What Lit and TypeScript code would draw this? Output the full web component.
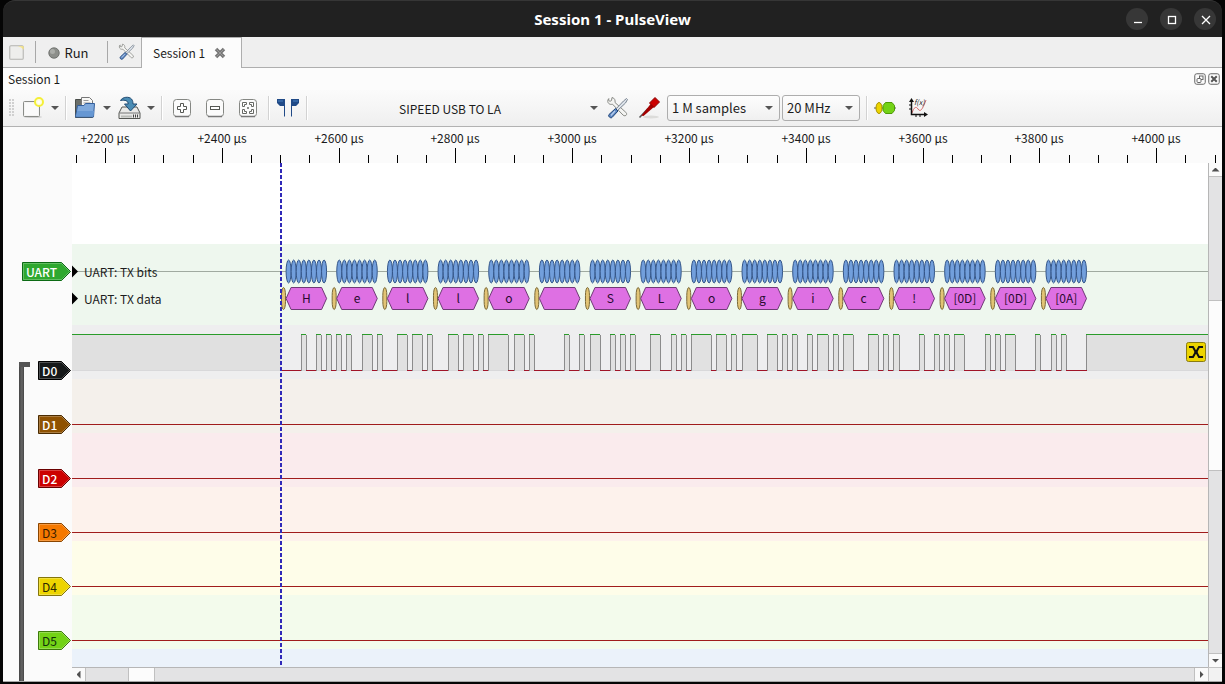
import { LitElement, html, svg, css } from "lit";
import { customElement, property, state } from "lit/decorators.js";

const CURSOR_X = 209;
const BIT = 5.066;
const FRAME = BIT * 10;
const MESSAGE = [
  ["H", 0x48], ["e", 0x65], ["l", 0x6c], ["l", 0x6c], ["o", 0x6f], ["", 0x20],
  ["S", 0x53], ["L", 0x4c], ["o", 0x6f], ["g", 0x67], ["i", 0x69], ["c", 0x63],
  ["!", 0x21], ["[0D]", 0x0d], ["[0D]", 0x0d], ["[0A]", 0x0a],
] as [string, number][];

const CHANNELS = [
  { name: "D0", fill: "#16191a", edge: "#000000", ink: "#ffffff", row: "#eeeeef" },
  { name: "D1", fill: "#8f5202", edge: "#4a2b01", ink: "#ffffff", row: "#f4f0eb" },
  { name: "D2", fill: "#cc0000", edge: "#6a0000", ink: "#ffffff", row: "#faebed" },
  { name: "D3", fill: "#f57900", edge: "#8a4500", ink: "#3a1c00", row: "#fdf2ec" },
  { name: "D4", fill: "#edd400", edge: "#84760a", ink: "#2c2800", row: "#fefde9" },
  { name: "D5", fill: "#73d216", edge: "#3c7a0a", ink: "#10300a", row: "#f3fbec" },
];

/** Level of the serial line for every bit slot, start and stop bits included. */
const LEVELS = MESSAGE.flatMap(([, byte]) => [
  0,
  ...Array.from({ length: 8 }, (_, i) => (byte >> i) & 1),
  1,
]);

const tools = svg`
  <path d="M3 2.500C1 4 1.500 7 3.500 8c1 .6 2.200.4 3 .2L17 19c1 1.200 3 1 3.500-.3.4-1-.1-1.800-.7-2.400L9 6.500c.5-2-.3-4.500-3-5l-.5 3-1.500.8-1.500-1z" fill="#f4f4f2" stroke="#888a85"/>
  <path d="M20.500 2.500l1 1-2 3.500L10 16l-1.500-1.500 9-9.500z" fill="#dde3ea" stroke="#7a8490"/>
  <path d="M9.500 12.500l2.500 2.500-6 6.500c-1.500 1.300-4.500-1.500-3-3z" fill="#5d86c0" stroke="#1f4478"/>
  <path d="M9 15l-4 4.500" stroke="#b9cfee" stroke-width="1.200"/>`;

@customElement("tool-icon")
class ToolIcon extends LitElement {
  @property() name = "";
  @property({ type: Number }) size = 24;
  static styles = css`
    :host { display: block; line-height: 0; }
    svg { display: block; fill: none; }
  `;
  private art() {
    switch (this.name) {
      case "new":
        return svg`<ellipse cx="12" cy="21" rx="9" ry="1" fill="#d0d0d0"/>
          <rect x="2.500" y="5.500" width="16" height="15" rx="1" fill="#f4f4f3" stroke="#8a8c88"/>
          <rect x="4" y="7" width="13" height="12" fill="#fafafa"/>
          <circle cx="18" cy="6" r="4" fill="#fffde0" stroke="#f4ef38" stroke-width="2"/>
          <circle cx="18" cy="6" r="1.500" fill="#fff"/>`;
      case "new-flat":
        return svg`<rect x="2.500" y="2.500" width="19" height="19" rx="1.500" fill="#eeeeec" stroke="#b4b4b0" stroke-width="1.500"/>
          <path d="M14 3h8v5l-3-3z" fill="#f6e480"/>`;
      case "open":
        return svg`<path d="M2.500 3.500h6l1 2h10v16h-17z" fill="#6a6e6a" stroke="#4a4e4a"/>
          <path d="M8.500 1.500h8l3 3v9h-11z" fill="#f8f8f6" stroke="#777"/>
          <path d="M10.500 4.500h5M10.500 7h7" stroke="#999"/>
          <path d="M4.500 9.500h6.500l1.500-2h9l-1 13.500h-18z" fill="#7fa9dc" stroke="#335f9c"/>
          <path d="M4 15h17l-.6 5.500H3.500z" fill="#6697d3"/>`;
      case "save":
        return svg`<path d="M5 11l-3 6v5.500h21V17l-3-6z" fill="#e9e9e7" stroke="#555753"/>
          <path d="M2.500 17h20" stroke="#777"/>
          <path d="M4 19.500h11v2H4z" fill="#b8bab6"/><path d="M16.500 18.500v3M18.500 18.500v3M20.500 18.500v3" stroke="#444"/>
          <path d="M3.500 4.500C5.500.8 12 .2 14.500 3c1.300 1.500 1.500 3.500 1.500 5h4l-6.500 7L7.500 8h3.700c0-3-2.700-4.500-7.700-3.500z" fill="#4a8cb4" stroke="#204a72"/>`;
      case "zoom-in":
      case "zoom-out":
      case "zoom-fit":
        return svg`<rect x="2.500" y="3.500" width="17" height="17" rx="3" fill="#fbfbfb" stroke="#858783"/>
          <path d="M4 20.500h14" stroke="#777" stroke-width="1.500"/>
          ${this.name === "zoom-in"
            ? svg`<path d="M9.500 7.500h3v3h3v3h-3v3h-3v-3h-3v-3h3z" fill="#fff" stroke="#555753"/>`
            : this.name === "zoom-out"
              ? svg`<rect x="6.500" y="10.500" width="9" height="3" fill="#fff" stroke="#555753"/>`
              : svg`<path d="M5.500 10.500v-4h4v2h-2v2zM12.500 6.500h4v4h-2v-2h-2zM5.500 13.500v4h4v-2h-2v-2zM12.500 17.500h4v-4h-2v2h-2z" fill="#fff" stroke="#666864"/>
                <circle cx="11" cy="12" r="1" fill="#666864"/>`}`;
      case "cursors":
        return svg`<path d="M1 3h8v17.500H8V10H4L1 7z" fill="#204a87"/><path d="M23 3h-8v17.500h1V10h4l3-3z" fill="#204a87"/>
          <path d="M2 4h5v2H2zM17 4h5v2h-5z" fill="#3465a4"/>`;
      case "tools":
        return tools;
      case "probe":
        return svg`<ellipse cx="14" cy="21" rx="8" ry="1.500" fill="#dcdcda"/>
          <path d="M2.500 21.500l8.500-9" stroke="#555" stroke-width="1.500"/>
          <path d="M4.500 19.500L14 7.500l3.500 3L6.500 20z" fill="#a40000"/>
          <path d="M12.500 7L18 1.500 22.500 6 17 11.500z" fill="#cc0000" stroke="#8a0000"/>`;
      case "decoder":
        return svg`<path d="M0 12h22" stroke="#555"/><ellipse cx="5" cy="12" rx="3" ry="5.500" fill="#edd400" stroke="#a89400"/>
          <path d="M11.500 6.500h6.500l2.500 3v5l-2.500 3h-6.500l-2.500-3v-5z" fill="#73d216" stroke="#4e9a06"/>`;
      case "math":
        return svg`<path d="M6 17c2-6 4-7 6-4s4 2 8-9" stroke="#d96a6a"/>
          <path d="M5.500 4v14.500H20" stroke="#111" stroke-width="1.500"/><path d="M5.500 2l2.500 4H3zM22 18.500l-4-2.500v5z" fill="#111"/>
          <path d="M3 9h2M3 13h2M10 19v2M14 19v2" stroke="#111"/>
          <text x="8" y="9" font-family="Noto Sans CJK SC, sans-serif" font-size="7" font-style="italic" fill="#222">f(x)</text>`;
      case "run":
        return svg`<circle cx="12" cy="12" r="10.500" fill="#8c8e8a" stroke="#5f615d" stroke-width="1.500"/><circle cx="9" cy="9" r="5" fill="#aaaca8"/>`;
      case "close":
        return svg`<path d="M4 4l16 16M20 4L4 20" stroke="#777" stroke-width="7"/><path d="M5 5l14 14M19 5L5 19" stroke="#999" stroke-width="2"/>`;
      case "win-min":
        return svg`<path d="M8 14.500h8" stroke="#fff" stroke-width="1.300"/>`;
      case "win-max":
        return svg`<rect x="8.500" y="8.500" width="7" height="7" stroke="#fff" stroke-width="1.300"/>`;
      case "win-close":
        return svg`<path d="M8 8l8 8M16 8l-8 8" stroke="#fff" stroke-width="1.300"/>`;
      case "dock-float":
        return svg`<rect x="1.500" y="1.500" width="21" height="21" rx="4" stroke="#666" stroke-width="2"/><rect x="11" y="6" width="7" height="7" stroke="#666" stroke-width="2"/><rect x="6" y="11" width="8" height="8" rx="2" fill="#fff" stroke="#666" stroke-width="2"/>`;
      case "dock-close":
        return svg`<rect x="1.500" y="1.500" width="21" height="21" rx="4" stroke="#666" stroke-width="2"/><path d="M6.500 6.500l11 11M17.500 6.500l-11 11" stroke="#555" stroke-width="4"/>`;
      case "trigger":
        return svg`<rect x="2.500" y="2.500" width="19" height="19" rx="2" fill="#edd400" stroke="#8a7c10"/>
          <path d="M5 7h4l2.200 4v2L9 17H5M19 7h-4l-2.200 4v2l2.200 4h4" stroke="#111" stroke-width="2"/>`;
    }
    return svg``;
  }
  render() {
    return html`<svg width=${this.size} height=${this.size} viewBox="0 0 24 24" aria-hidden="true">${this.art()}</svg>`;
  }
}

@customElement("signal-tag")
class SignalTag extends LitElement {
  @property() label = "";
  @property() fill = "";
  @property() edge = "";
  @property() ink = "#fff";
  @property({ type: Number }) width = 33;
  static styles = css`
    :host { display: block; }
    svg { display: block; }
    text { font: 12px "Noto Sans CJK SC", sans-serif; }
    .strong { font-weight: 500; }
  `;
  render() {
    const w = this.width;
    const outline = (i: number) =>
      `M${0.5 + i} ${0.5 + i}H${w - 9.5}L${w - 0.5 - i} 9.500L${w - 9.5} ${18.5 - i}H${0.5 + i}Z`;
    return html`<svg width=${w} height="20">
      <path d=${outline(0)} fill=${this.fill} stroke=${this.edge}></path>
      <path d=${outline(1)} fill="none" stroke="#fff" stroke-opacity="0.250"></path>
      <text class=${this.ink === "#ffffff" ? "strong" : ""} x="4" y="15" fill=${this.ink}>${this.label}</text>
    </svg>`;
  }
}

@customElement("time-ruler")
class TimeRuler extends LitElement {
  @state() private span = window.innerWidth;
  static styles = css`
    :host { display: block; height: 36px; overflow: hidden; }
    svg { display: block; width: 100%; height: 36px; }
    text { font: 12px "Noto Sans CJK SC", sans-serif; fill: #1a1a1a; text-anchor: middle; }
  `;
  private measure = () => { this.span = window.innerWidth; };
  connectedCallback() {
    super.connectedCallback();
    window.addEventListener("resize", this.measure);
  }
  disconnectedCallback() {
    window.removeEventListener("resize", this.measure);
    super.disconnectedCallback();
  }
  render() {
    const origin = 33;
    const step = 29.2;
    const count = Math.floor((this.span - 76 - origin) / step) + 2;
    return html`<svg>
      ${Array.from({ length: count }, (_, n) => {
        const i = n - 1;
        const x = Math.round(origin + i * step);
        const major = i % 4 === 0;
        return svg`<rect x=${x} y=${major ? 21 : 28} width="1" height=${major ? 15 : 8} fill="#000"></rect>
          ${major ? svg`<text x=${x} y="16">+${2200 + i * 50} µs</text>` : ""}`;
      })}
    </svg>`;
  }
}

@customElement("trace-view")
class TraceView extends LitElement {
  static styles = css`
    :host { display: block; position: relative; overflow: hidden; background: #fff; min-height: 0; }
    svg { display: block; width: 100%; height: 100%; }
    text { font: 12px "Noto Sans CJK SC", sans-serif; fill: #1c1c1c; }
    .value { text-anchor: middle; fill: #2a0a30; }
    .trigger { position: absolute; right: 0; top: 177px; padding: 0; border: 0; background: none; }
  `;

  private frame(label: string, index: number) {
    const start = CURSOR_X + index * FRAME;
    const x = start + BIT;
    const end = x + BIT * 8;
    return svg`
      ${Array.from({ length: 8 }, (_, b) => svg`<ellipse cx=${x + BIT * (b + 0.5)} cy="108.500" rx="2.500" ry="11.500" fill="#729fdc" stroke="#34568a"></ellipse>`)}
      <rect x=${start + 0.5} y="124.500" width="4" height="22" rx="2" ry="8" fill="#e2c475" stroke="#7c6a38"></rect>
      <path d="M${x} 135.500L${x + 5} 124.500H${end - 5}L${end} 135.500L${end - 5} 146.500H${x + 5}Z" fill="#de70e3" stroke="#6f3a76"></path>
      <text class="value" x=${(x + end) / 2} y="140">${label}</text>`;
  }

  private wave() {
    const parts = [];
    const end = CURSOR_X + LEVELS.length * BIT;
    const runs: { x: number; to: number; level: number }[] = [];
    LEVELS.forEach((level, i) => {
      const x = CURSOR_X + i * BIT;
      const last = runs[runs.length - 1];
      if (last && last.level === level) last.to = x + BIT;
      else runs.push({ x, to: x + BIT, level });
    });
    for (const run of runs) {
      const x = Math.round(run.x - 0.5);
      const w = Math.round(run.to - 0.5) - x;
      if (run.level && run.to < end - 1) {
        parts.push(svg`<rect x=${x} y="172" width=${w} height="35" fill="#e1e1e1"></rect>
          <rect x=${x} y="171" width=${w} height="1" fill="#2a9c2a"></rect>
          <path d="M${x + 0.5} 172v36M${x + w + 0.5} 172v36" stroke="#8c8c8c"></path>`);
      } else if (!run.level) {
        parts.push(svg`<rect x=${x} y="207" width=${w + 1} height="1" fill="#a01428"></rect>`);
      }
    }
    const idle = Math.round(end - BIT - 0.5);
    return svg`
      <rect x="0" y="172" width=${CURSOR_X} height="35" fill="#e0e0e0"></rect>
      <rect x="0" y="207" width="100%" height="1" fill="#d8d8da"></rect>
      <rect x="0" y="171" width=${CURSOR_X} height="1" fill="#2a9c2a"></rect>
      <rect x=${idle} y="172" width="100%" height="35" fill="#e0e0e0"></rect>
      <rect x=${idle} y="171" width="100%" height="1" fill="#2a9c2a"></rect>
      <path d="M${idle + 0.5} 172v36" stroke="#8c8c8c"></path>
      ${parts}`;
  }

  render() {
    return html`<svg>
        <rect y="81" width="100%" height="81" fill="#eef7ee"></rect>
        ${CHANNELS.map((c, i) => svg`<rect y=${162 + i * 54} width="100%" height="54" fill=${c.row}></rect>`)}
        <rect y="486" width="100%" height="200" fill="#ebf2fa"></rect>
        ${CHANNELS.slice(1).map((_, i) => svg`<rect y=${261 + i * 54} width="100%" height="1" fill="#a01c1c"></rect>`)}
        <rect y="108" width="100%" height="1" fill="#a0aaa0"></rect>
        <path d="M0 102.500L6 108.500L0 114.500ZM0 129.500L6 135.500L0 141.500Z" fill="#000"></path>
        <text x="12" y="114">UART: TX bits</text>
        <text x="12" y="141">UART: TX data</text>
        ${MESSAGE.map(([label], i) => this.frame(label, i))}
        ${this.wave()}
        <line x1=${CURSOR_X} x2=${CURSOR_X} y1="0" y2="100%" stroke="#3029b8" stroke-width="2" stroke-dasharray="4 2"></line>
      </svg>
      <button class="trigger" aria-label="Trigger marker"><tool-icon name="trigger"></tool-icon></button>`;
  }
}

@customElement("app-root")
class AppRoot extends LitElement {
  static styles = css`
    :host {
      display: flex; flex-direction: column; box-sizing: border-box; height: 100vh;
      padding: 0 3px 2px; background: #050505; color: #1c1c1c; overflow: hidden;
      font: 12px/18px "Noto Sans CJK SC", sans-serif;
    }
    * { box-sizing: border-box; }
    button { border: 0; padding: 0; margin: 0; background: none; color: inherit; font: inherit; }
    h1, h2 { margin: 0; font: inherit; }
    .titlebar {
      flex: none; display: grid; grid-template-columns: 1fr auto 1fr; align-items: center; height: 37px;
      padding: 0 6px; background: #212121; border-top: 1px solid #363636;
      border-radius: 12px 12px 0 0; color: #fff;
    }
    .titlebar h1 { grid-column: 2; font: bold 15px/20px "Noto Sans", sans-serif; }
    .window-buttons { display: flex; justify-content: flex-end; gap: 12px; }
    .window-buttons button { display: grid; place-items: center; width: 22px; height: 22px; border-radius: 50%; background: #373737; }
    .tabs { flex: none; display: flex; align-items: stretch; height: 31px; background: #efefef; border-bottom: 1px solid #aeaeae; }
    .tabs > button { display: flex; align-items: center; justify-content: center; gap: 4px; }
    .tabs .new { width: 32px; padding-right: 6px; }
    .tabs .run { width: 73px; padding: 2px 6px 0 0; border: solid #a8a8a8; border-width: 0 1px; margin: 4px 0; font-size: 13px; }
    .tabs .settings { width: 33px; padding-left: 4px; }
    .tab { display: flex; align-items: center; gap: 9px; height: 31px; padding: 0 15px 0 11px; background: #fcfcfc; border: 1px solid #aeaeae; border-bottom: 0; }
    .dock { flex: none; display: flex; align-items: center; gap: 2px; height: 22px; padding: 0 2px 0 5px; background: #fcfcfc; }
    .dock h2 { flex: 1; }
    .toolbar {
      flex: none; display: flex; align-items: center; gap: 6px; height: 37px; padding-left: 6px;
      background: linear-gradient(#fbfbfb, #efefef); border-bottom: 1px solid #b2b2b2;
    }
    .toolbar > button { flex: none; display: grid; place-items: center; width: 24px; height: 28px; }
    .toolbar > .wide { width: 27px; }
    .toolbar > .drop { width: 8px; }
    .arrow { flex: none; width: 8px; height: 4px; background: #555; clip-path: polygon(0 0, 100% 0, 50% 100%); }
    .grip { flex: none; width: 6px; height: 18px; background: radial-gradient(circle at 1px 1px, #d0d0d0 0 1px, transparent 1px) 0 0 / 3px 3px; }
    .sep { flex: none; width: 2px; height: 24px; border-left: 1px solid #d2d2d2; background: #fff; }
    .toolbar > .device { display: flex; align-items: center; gap: 4px; width: 284px; }
    .device span:first-child { flex: 1; padding-top: 2px; }
    .combos { display: flex; gap: 2px; font-size: 13px; }
    .combo { display: grid; align-items: center; }
    .combo > * { grid-area: 1 / 1; }
    .combo .arrow { justify-self: end; margin-right: 7px; pointer-events: none; }
    select {
      appearance: none; width: 113px; height: 26px; padding: 0 20px 0 4px; color: inherit; font: inherit;
      background: linear-gradient(#fdfdfd, #f0f0f0); border: 1px solid #adadad; border-radius: 3px;
    }
    .rate select { width: 78px; }
    .body {
      flex: 1; min-height: 0; display: grid; grid-template: 36px minmax(0, 1fr) 14px / 69px minmax(0, 1fr) 14px;
      background: #fbfbfb; border-bottom: 1px solid #a8a8a8;
    }
    .ruler { grid-column: 2 / 4; }
    .names { grid-area: 2 / 1 / 4 / 2; display: flex; flex-direction: column; align-items: flex-end; padding: 99px 1px 0 15px; overflow: hidden; }
    .group {
      flex: 1; align-self: stretch; min-height: 0; display: flex; flex-direction: column; align-items: flex-end; gap: 34px; margin-top: 79px;
      background: linear-gradient(#555, #555) 1px 1px / 11px 5px no-repeat, linear-gradient(90deg, #444, #666 60%, #444) 1px 1px / 5px 100% no-repeat;
    }
    trace-view { grid-area: 2 / 2; }
    .vscroll, .hscroll { display: flex; background: #e3e3e4; }
    .vscroll { grid-area: 2 / 3; flex-direction: column; border-left: 1px solid #b6b6b6; }
    .hscroll { grid-area: 3 / 2; border-top: 1px solid #b6b6b6; }
    .vscroll button, .hscroll button { flex: none; width: 13px; height: 13px; display: grid; place-items: center; background: #fafafa; color: #505050; }
    .vscroll .before { flex: 124; border-top: 1px solid #c0c0c0; }
    .vscroll .thumb { flex: 169; background: #fcfcfc; border: solid #c0c0c0; border-width: 1px 0; }
    .vscroll .after { flex: 183; border-bottom: 1px solid #c0c0c0; }
    .hscroll .before { flex: 42; border-left: 1px solid #c0c0c0; }
    .hscroll .thumb { flex: 25; background: #fcfcfc; border: solid #c0c0c0; border-width: 0 1px; }
    .hscroll .after { flex: 1041; border-right: 1px solid #c0c0c0; }
    .corner { grid-area: 3 / 3; background: #f2f2f2; border: solid #c4c4c4; border-width: 1px 0 0 1px; }
    .up, .down { width: 8px; height: 4px; background: currentColor; clip-path: polygon(50% 0, 100% 100%, 0 100%); }
    .down { clip-path: polygon(0 0, 100% 0, 50% 100%); }
    .left, .right { width: 4px; height: 8px; background: currentColor; clip-path: polygon(100% 0, 100% 100%, 0 50%); }
    .right { clip-path: polygon(0 0, 100% 50%, 0 100%); }
  `;

  private tool(name: string, label: string, wide = false) {
    return html`<button class=${wide ? "wide" : ""} aria-label=${label}><tool-icon name=${name}></tool-icon></button>`;
  }
  private drop(label: string) {
    return html`<button class="drop" aria-label=${label}><span class="arrow"></span></button>`;
  }

  render() {
    return html`
      <header class="titlebar">
        <h1>Session 1 - PulseView</h1>
        <div class="window-buttons">
          <button aria-label="Minimize"><tool-icon name="win-min"></tool-icon></button>
          <button aria-label="Maximize"><tool-icon name="win-max"></tool-icon></button>
          <button aria-label="Close"><tool-icon name="win-close"></tool-icon></button>
        </div>
      </header>
      <nav class="tabs">
        <button class="new" aria-label="New session"><tool-icon name="new-flat" size="17"></tool-icon></button>
        <button class="run"><tool-icon name="run" size="12"></tool-icon>Run</button>
        <button class="settings" aria-label="Settings"><tool-icon name="tools" size="18"></tool-icon></button>
        <div class="tab"><span>Session 1</span><button aria-label="Close tab"><tool-icon name="close" size="12"></tool-icon></button></div>
      </nav>
      <div class="dock">
        <h2>Session 1</h2>
        <button aria-label="Float"><tool-icon name="dock-float" size="12"></tool-icon></button>
        <button aria-label="Close view"><tool-icon name="dock-close" size="12"></tool-icon></button>
      </div>
      <div class="toolbar">
        <span class="grip"></span>
        ${this.tool("new", "New view")}${this.drop("View types")}
        <span class="sep"></span>
        ${this.tool("open", "Open")}${this.drop("Open options")}
        ${this.tool("save", "Save")}${this.drop("Save options")}
        <span class="sep"></span>
        ${this.tool("zoom-in", "Zoom in", true)}${this.tool("zoom-out", "Zoom out", true)}${this.tool("zoom-fit", "Zoom to fit", true)}
        <span class="sep"></span>
        ${this.tool("cursors", "Show cursors")}
        <span class="sep"></span>
        <button class="device"><span>SIPEED USB TO LA</span><span class="arrow"></span></button>
        ${this.tool("tools", "Configure device", true)}${this.tool("probe", "Configure channels")}
        <div class="combos">
          <div class="combo"><select aria-label="Sample count"><option>1 M samples</option></select><span class="arrow"></span></div>
          <div class="combo rate"><select aria-label="Sample rate"><option>20 MHz</option></select><span class="arrow"></span></div>
        </div>
        <span class="sep"></span>
        ${this.tool("decoder", "Add protocol decoder")}${this.tool("math", "Add math signal", true)}
      </div>
      <main class="body">
        <time-ruler class="ruler"></time-ruler>
        <div class="names">
          <signal-tag label="UART" width="49" fill="#2fa82f" edge="#0c6a14" ink="#ffffff"></signal-tag>
          <div class="group">
            ${CHANNELS.map((c) => html`<signal-tag label=${c.name} fill=${c.fill} edge=${c.edge} ink=${c.ink}></signal-tag>`)}
          </div>
        </div>
        <trace-view></trace-view>
        <div class="vscroll">
          <button aria-label="Scroll up"><span class="up"></span></button>
          <div class="before"></div><div class="thumb"></div><div class="after"></div>
          <button aria-label="Scroll down"><span class="down"></span></button>
        </div>
        <div class="hscroll">
          <button aria-label="Scroll left"><span class="left"></span></button>
          <div class="before"></div><div class="thumb"></div><div class="after"></div>
          <button aria-label="Scroll right"><span class="right"></span></button>
        </div>
        <div class="corner"></div>
      </main>`;
  }
}
